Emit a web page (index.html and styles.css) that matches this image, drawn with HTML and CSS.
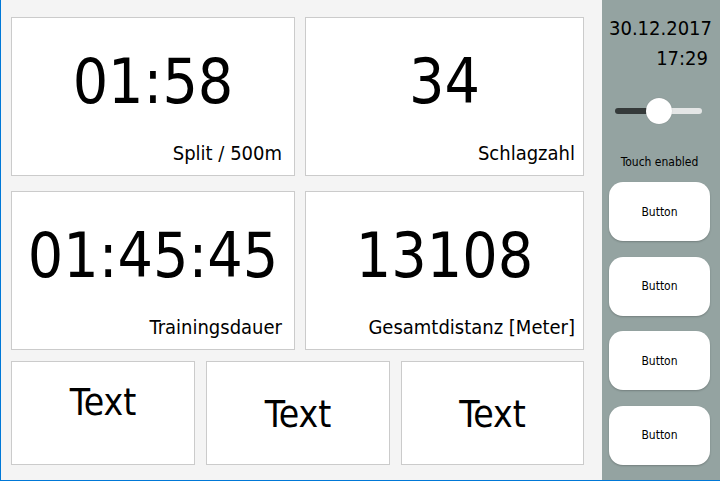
FILE: index.html
```html
<!DOCTYPE html>
<html lang="de">
<head>
<meta charset="utf-8">
<title>Rudern Monitor</title>
<link rel="stylesheet" href="styles.css">
</head>
<body>
<div class="window">
  <main class="main">
    <section class="metrics">
      <div class="card metric">
        <div class="value">01:58</div>
        <div class="label label-wide">Split / 500m</div>
      </div>
      <div class="card metric">
        <div class="value">34</div>
        <div class="label">Schlagzahl</div>
      </div>
      <div class="card metric">
        <div class="value">01:45:45</div>
        <div class="label label-wide">Trainingsdauer</div>
      </div>
      <div class="card metric">
        <div class="value">13108</div>
        <div class="label">Gesamtdistanz [Meter]</div>
      </div>
    </section>
    <section class="texts">
      <div class="card text-card top">Text</div>
      <div class="card text-card">Text</div>
      <div class="card text-card">Text</div>
    </section>
  </main>
  <aside class="panel">
    <div class="clock">
      <div class="date">30.12.2017</div>
      <div class="time">17:29</div>
    </div>
    <div class="slider">
      <div class="track"></div>
      <div class="thumb"></div>
    </div>
    <div class="touch">Touch enabled</div>
    <div class="buttons">
      <button class="btn">Button</button>
      <button class="btn">Button</button>
      <button class="btn">Button</button>
      <button class="btn">Button</button>
    </div>
  </aside>
</div>
</body>
</html>
```
FILE: styles.css
```css
* { box-sizing: border-box; }
html, body {
  margin: 0;
  padding: 0;
  width: 720px;
  height: 481px;
  overflow: hidden;
}
body {
  font-family: "DejaVu Sans Condensed", "DejaVu Sans", sans-serif;
  font-stretch: condensed;
  color: #000;
}
.window {
  display: flex;
  width: 720px;
  height: 481px;
  border-left: 1px solid #0078d7;
  border-bottom: 1px solid #0078d7;
}
.main {
  width: 601px;
  height: 480px;
  background: #f4f4f4;
  padding: 17px 0 0 10px;
}
.card {
  background: #fff;
  border: 1px solid #cbcbcb;
}
.metrics {
  display: grid;
  grid-template-columns: 284px 279px;
  grid-template-rows: 159px 159px;
  column-gap: 10px;
  row-gap: 15px;
}
.metric {
  display: flex;
  flex-direction: column;
  justify-content: space-between;
  padding: 33px 8px 12px 8px;
}
.value {
  font-size: 62px;
  line-height: 62px;
  text-align: center;
}
.label {
  font-size: 20px;
  line-height: 20px;
  text-align: right;
}
.label-wide { padding-right: 4px; }
.texts {
  display: grid;
  grid-template-columns: 184px 184px 183px;
  column-gap: 11px;
  margin-top: 11px;
  height: 104px;
}
.text-card {
  display: flex;
  align-items: center;
  justify-content: center;
  font-size: 37px;
  line-height: 37px;
  padding-top: 3px;
}
.text-card.top {
  align-items: flex-start;
  padding-top: 22px;
}
.panel {
  width: 118px;
  height: 480px;
  background: #94a3a1;
  padding: 13px 10px 0 7px;
  display: flex;
  flex-direction: column;
}
.clock {
  text-align: right;
  padding-right: 2px;
  font-size: 20px;
  line-height: 30px;
}
.slider {
  position: relative;
  height: 26px;
  margin-top: 25px;
}
.track {
  position: absolute;
  left: 6px;
  right: 8px;
  top: 10px;
  height: 6px;
  border-radius: 3px;
  background: linear-gradient(to right, #353a3a 0, #353a3a 50%, #e4e6e6 50%, #e4e6e6 100%);
}
.thumb {
  position: absolute;
  left: 37px;
  top: 0;
  width: 26px;
  height: 26px;
  border-radius: 50%;
  background: #fff;
  box-shadow: 0 0 1px rgba(0,0,0,0.25);
}
.touch {
  margin-top: 31px;
  font-size: 12px;
  line-height: 14px;
  text-align: center;
}
.buttons {
  margin-top: 13px;
  display: flex;
  flex-direction: column;
  gap: 15.5px;
}
.btn {
  width: 101px;
  height: 59px;
  border: none;
  border-radius: 14px;
  background: #fff;
  box-shadow: 0 1px 2px rgba(0,0,0,0.22);
  font-family: inherit;
  font-stretch: condensed;
  font-size: 12px;
  color: #000;
  padding: 0;
}
```
